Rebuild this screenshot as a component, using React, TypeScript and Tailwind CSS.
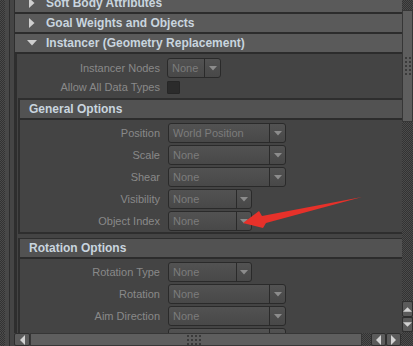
import React from "react";

const checker =
  "bg-[repeating-conic-gradient(#333333_0_25%,#4b4b4b_0_50%)] bg-[length:2px_2px]";

function DownTri({ color = "#8c8c8c" }: { color?: string }) {
  return (
    <svg width="8" height="5" viewBox="0 0 8 5">
      <polygon points="0,0 8,0 4,4.5" fill={color} />
    </svg>
  );
}

function Drop({ w, value, arrowW }: { w: string; value: string; arrowW: string }) {
  return (
    <div
      className={`flex h-[20px] ${w} rounded-[3px] border border-[#2a2a2a] bg-gradient-to-b from-[#525252] to-[#484848]`}
    >
      <div className="flex-1 overflow-hidden whitespace-nowrap pl-[4px] text-[11px] leading-[18px] text-[#7c7c7c]">
        {value}
      </div>
      <div className={`${arrowW} flex items-center justify-center border-l border-[#2a2a2a]`}>
        <DownTri />
      </div>
    </div>
  );
}

function Row({
  label,
  value,
  short,
  labelW,
}: {
  label: string;
  value: string;
  short?: boolean;
  labelW: string;
}) {
  return (
    <div className="flex h-[20px] shrink-0 items-center gap-[8px]">
      <div className={`${labelW} shrink-0 text-right text-[11px] text-[#898989] whitespace-nowrap`}>
        {label}
      </div>
      {short ? (
        <Drop w="w-[84px]" value={value} arrowW="w-[15px]" />
      ) : (
        <Drop w="w-[118px]" value={value} arrowW="w-[16px]" />
      )}
    </div>
  );
}

function MainHeader({ title, open, extra }: { title: string; open?: boolean; extra?: string }) {
  return (
    <div
      className={`flex h-[20px] shrink-0 items-center border-b-2 border-[#2c2c2c] bg-[#5a5a5a] ${extra ?? ""}`}
    >
      <div className="flex w-[31px] justify-center pl-[3px]">
        {open ? (
          <svg width="10" height="6" viewBox="0 0 10 6">
            <polygon points="0,0 10,0 5,5.5" fill="#cfcfcf" />
          </svg>
        ) : (
          <svg width="6" height="10" viewBox="0 0 6 10">
            <polygon points="0,0 5.5,5 0,10" fill="#cfcfcf" />
          </svg>
        )}
      </div>
      <div className="text-[12px] font-bold text-[#c9d5df] whitespace-nowrap">{title}</div>
    </div>
  );
}

function SubHeader({ title }: { title: string }) {
  return (
    <div className="flex h-[20px] items-center border-b-2 border-[#2c2c2c] bg-[#525252] pl-[9px]">
      <div className="text-[12px] font-bold text-[#c9d5df] whitespace-nowrap">{title}</div>
    </div>
  );
}

function Dots({ cols, rows }: { cols: number; rows: number }) {
  return (
    <div
      className="grid gap-[2px]"
      style={{ gridTemplateColumns: `repeat(${cols}, 2px)`, gridTemplateRows: `repeat(${rows}, 2px)` }}
    >
      {Array.from({ length: cols * rows }).map((_, i) => (
        <div key={i} className="h-[2px] w-[2px] bg-[#3a3a3a]" />
      ))}
    </div>
  );
}

function ScrollBtn({ dir, cls }: { dir: "up" | "down" | "left" | "right"; cls: string }) {
  const pts =
    dir === "up"
      ? "0,5 10,5 5,0"
      : dir === "down"
      ? "0,0 10,0 5,5"
      : dir === "left"
      ? "5,0 5,10 0,5"
      : "0,0 0,10 5,5";
  const w = dir === "up" || dir === "down" ? 10 : 5;
  const h = dir === "up" || dir === "down" ? 5 : 10;
  return (
    <div
      className={`flex items-center justify-center rounded-[2px] border border-[#2e2e2e] bg-[#5b5b5b] ${cls}`}
    >
      <svg width={w} height={h} viewBox={`0 0 ${w} ${h}`}>
        <polygon points={pts} fill="#d2d2d2" />
      </svg>
    </div>
  );
}

export default function App() {
  return (
    <div className="relative flex h-[346px] w-[413px] flex-col overflow-hidden bg-[#444444] font-['Liberation_Sans',Arial,sans-serif]">
      {/* top area */}
      <div className="flex h-[333px] shrink-0">
        {/* left gutter */}
        <div className="flex h-full w-[15px] shrink-0">
          <div className={`h-full w-[5px] ${checker}`} />
          <div className="h-full w-[4px] bg-[#484848]" />
          <div className="h-full w-[1px] bg-[#2e2e2e]" />
          <div className="h-full w-[4px] bg-[#454545]" />
          <div className="h-full w-[1px] bg-[#2e2e2e]" />
        </div>

        {/* main content */}
        <div className="flex h-full w-[387px] shrink-0 flex-col overflow-hidden">
          <MainHeader title="Soft Body Attributes" extra="-mt-[6px]" />
          <MainHeader title="Goal Weights and Objects" />
          <MainHeader title="Instancer (Geometry Replacement)" open />

          <div className="flex flex-1 flex-col border-l-2 border-[#2e2e2e]">
            <div className="mt-[4px]">
              <div className="flex h-[20px] items-center gap-[7px]">
                <div className="w-[143px] shrink-0 text-right text-[11px] text-[#898989]">
                  Instancer Nodes
                </div>
                <Drop w="w-[54px]" value="None" arrowW="w-[16px]" />
              </div>
            </div>
            <div className="mt-[3px] flex h-[13px] items-center gap-[7px]">
              <div className="w-[143px] shrink-0 text-right text-[11px] text-[#898989]">
                Allow All Data Types
              </div>
              <div className="h-[13px] w-[13px] rounded-[1px] border border-[#262626] bg-[#2b2b2b]" />
            </div>

            {/* General Options */}
            <div className="ml-[1px] mt-[4px] shrink-0 border-l-2 border-t-2 border-b-2 border-[#2e2e2e]">
              <SubHeader title="General Options" />
              <div className="flex flex-col gap-[2px] pb-[1px] pt-[3px]">
                <Row labelW="w-[140px]" label="Position" value="World Position" />
                <Row labelW="w-[140px]" label="Scale" value="None" />
                <Row labelW="w-[140px]" label="Shear" value="None" />
                <Row labelW="w-[140px]" label="Visibility" value="None" short />
                <Row labelW="w-[140px]" label="Object Index" value="None" short />
              </div>
            </div>

            {/* Rotation Options */}
            <div className="ml-[1px] mt-[4px] shrink-0 border-l-2 border-t border-[#2e2e2e]">
              <SubHeader title="Rotation Options" />
              <div className="flex flex-col gap-[2px] pt-[3px]">
                <Row labelW="w-[140px]" label="Rotation Type" value="None" short />
                <Row labelW="w-[140px]" label="Rotation" value="None" />
                <Row labelW="w-[140px]" label="Aim Direction" value="None" />
                <Row labelW="w-[140px]" label="" value="" />
              </div>
            </div>
          </div>
        </div>

        {/* vertical scrollbar */}
        <div className={`flex h-full w-[11px] shrink-0 flex-col ${checker}`}>
          <div className="h-[10px] shrink-0" />
          <div className="flex h-[112px] shrink-0 items-center justify-center border border-[#363636] bg-[#5e5e5e]">
            <Dots cols={2} rows={5} />
          </div>
          <div className="flex-1" />
          <ScrollBtn dir="up" cls="h-[16px] w-[11px] shrink-0" />
          <ScrollBtn dir="down" cls="h-[15px] w-[11px] shrink-0" />
          <div className="h-[1px] shrink-0" />
        </div>
      </div>

      {/* bottom scrollbar row */}
      <div className="flex h-[13px] shrink-0">
        <div className="flex h-full w-[14px] shrink-0">
          <div className={`h-full w-[5px] ${checker}`} />
          <div className="h-full w-[4px] bg-[#484848]" />
          <div className="h-full w-[1px] bg-[#2e2e2e]" />
          <div className="h-full w-[4px] bg-[#454545]" />
        </div>
        <ScrollBtn dir="left" cls="h-[13px] w-[16px] shrink-0" />
        <div className="flex h-full w-[332px] shrink-0 items-center border border-[#363636] bg-[#5e5e5e] pl-[156px]">
          <Dots cols={4} rows={3} />
        </div>
        <div className={`h-full w-[9px] shrink-0 ${checker}`} />
        <ScrollBtn dir="left" cls="h-[13px] w-[15px] shrink-0" />
        <ScrollBtn dir="right" cls="h-[13px] w-[15px] shrink-0" />
        <div className={`h-full flex-1 ${checker}`} />
      </div>

      {/* red annotation arrow */}
      <svg
        className="pointer-events-none absolute left-0 top-0"
        width="413"
        height="346"
        viewBox="0 0 413 346"
      >
        <polygon
          points="243,223 259,211 262,216 362,197 266,223 263,228"
          fill="#e6312a"
        />
      </svg>
    </div>
  );
}
